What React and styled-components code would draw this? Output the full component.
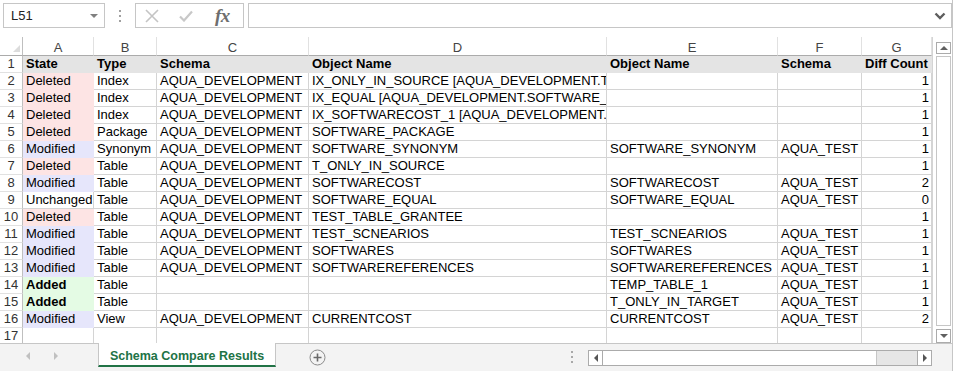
import React from "react";
import styled, { createGlobalStyle } from "styled-components";

const Global = createGlobalStyle`
  html, body { margin: 0; padding: 0; background: #fff; }
  body { font-family: "Liberation Sans", Arial, sans-serif; }
  * { box-sizing: border-box; }
`;

const COLS = [71, 63, 152, 298, 171, 84, 70];
const LETTERS = ["A", "B", "C", "D", "E", "F", "G"];
const GRID_TEMPLATE = `23px ${COLS.map((c) => c + "px").join(" ")}`;

const STATE_BG = {
  Deleted: "#fde4e4",
  Modified: "#e6e6fb",
  Added: "#e4fbe4",
};

const rows = [
  ["Deleted", "Index", "AQUA_DEVELOPMENT", "IX_ONLY_IN_SOURCE [AQUA_DEVELOPMENT.T_ONLY_IN_SOURCE]", "", "", "1"],
  ["Deleted", "Index", "AQUA_DEVELOPMENT", "IX_EQUAL [AQUA_DEVELOPMENT.SOFTWARE_EQUAL]", "", "", "1"],
  ["Deleted", "Index", "AQUA_DEVELOPMENT", "IX_SOFTWARECOST_1 [AQUA_DEVELOPMENT.SOFTWARECOST]", "", "", "1"],
  ["Deleted", "Package", "AQUA_DEVELOPMENT", "SOFTWARE_PACKAGE", "", "", "1"],
  ["Modified", "Synonym", "AQUA_DEVELOPMENT", "SOFTWARE_SYNONYM", "SOFTWARE_SYNONYM", "AQUA_TEST", "1"],
  ["Deleted", "Table", "AQUA_DEVELOPMENT", "T_ONLY_IN_SOURCE", "", "", "1"],
  ["Modified", "Table", "AQUA_DEVELOPMENT", "SOFTWARECOST", "SOFTWARECOST", "AQUA_TEST", "2"],
  ["Unchanged", "Table", "AQUA_DEVELOPMENT", "SOFTWARE_EQUAL", "SOFTWARE_EQUAL", "AQUA_TEST", "0"],
  ["Deleted", "Table", "AQUA_DEVELOPMENT", "TEST_TABLE_GRANTEE", "", "", "1"],
  ["Modified", "Table", "AQUA_DEVELOPMENT", "TEST_SCNEARIOS", "TEST_SCNEARIOS", "AQUA_TEST", "1"],
  ["Modified", "Table", "AQUA_DEVELOPMENT", "SOFTWARES", "SOFTWARES", "AQUA_TEST", "1"],
  ["Modified", "Table", "AQUA_DEVELOPMENT", "SOFTWAREREFERENCES", "SOFTWAREREFERENCES", "AQUA_TEST", "1"],
  ["Added", "Table", "", "", "TEMP_TABLE_1", "AQUA_TEST", "1"],
  ["Added", "Table", "", "", "T_ONLY_IN_TARGET", "AQUA_TEST", "1"],
  ["Modified", "View", "AQUA_DEVELOPMENT", "CURRENTCOST", "CURRENTCOST", "AQUA_TEST", "2"],
];

const HEADER = ["State", "Type", "Schema", "Object Name", "Object Name", "Schema", "Diff Count"];

const Window = styled.div`
  width: 953px;
  height: 371px;
  overflow: hidden;
  border-right: 1px solid #c6c6c6;
  display: flex;
  flex-direction: column;
  background: #fff;
`;

const Toolbar = styled.div`
  height: 37px;
  flex: none;
  display: flex;
  align-items: flex-start;
  padding: 3px 0 0 3px;
`;

const NameBox = styled.div`
  width: 102px;
  height: 25px;
  border: 1px solid #c6c6c6;
  display: flex;
  align-items: center;
  justify-content: space-between;
  padding: 0 6px 0 7px;
  font-size: 13px;
  color: #222;
`;

const Caret = styled.span`
  width: 0;
  height: 0;
  border-left: 4px solid transparent;
  border-right: 4px solid transparent;
  border-top: 4px solid #808080;
`;

const Dots = styled.div`
  width: 30px;
  height: 25px;
  display: flex;
  flex-direction: column;
  align-items: center;
  justify-content: center;
  gap: 3px;
  & > span {
    width: 2px;
    height: 2px;
    background: #a0a0a0;
  }
`;

const IconBox = styled.div`
  width: 109px;
  height: 25px;
  border: 1px solid #c6c6c6;
  display: flex;
  align-items: center;
  padding-left: 9px;
  gap: 20px;
`;

const Fx = styled.span`
  font-family: "Liberation Serif", "Times New Roman", serif;
  font-style: italic;
  font-weight: bold;
  font-size: 19px;
  color: #6e6e6e;
  margin-left: 2px;
  letter-spacing: -0.5px;
  line-height: 1;
`;

const FormulaInput = styled.div`
  flex: 1;
  margin-left: 4px;
  height: 25px;
  border: 1px solid #c6c6c6;
  display: flex;
  align-items: center;
  justify-content: flex-end;
  padding-right: 5px;
`;

const Main = styled.div`
  flex: 1;
  display: flex;
  min-height: 0;
`;

const Sheet = styled.div`
  width: 932px;
  flex: none;
  overflow: hidden;
  display: grid;
  grid-template-columns: ${GRID_TEMPLATE};
  grid-auto-rows: 17px;
  grid-template-rows: 19px;
  align-content: start;
  font-size: 13px;
  color: #000;
`;

const Corner = styled.div`
  border-right: 1px solid #bfbfbf;
  border-bottom: 1px solid #ababab;
  position: relative;
  &::after {
    content: "";
    position: absolute;
    right: 2px;
    bottom: 3px;
    width: 0;
    height: 0;
    border-left: 7px solid transparent;
    border-bottom: 7px solid #dcdcdc;
  }
`;

const ColHead = styled.div`
  border-right: 1px solid #e1e1e1;
  border-bottom: 1px solid #ababab;
  display: flex;
  align-items: center;
  justify-content: center;
  color: #444;
  font-size: 13px;
  padding-top: 2px;
`;

const RowHead = styled.div`
  border-right: 1px solid #bfbfbf;
  border-bottom: 1px solid #e1e1e1;
  display: flex;
  align-items: center;
  justify-content: center;
  color: #333;
  font-size: 13px;
  line-height: 16px;
`;

const Cell = styled.div`
  background: ${(p) => p.$bg || "#fff"};
  border-right: 1px solid ${(p) => p.$bg || "#d4d4d4"};
  border-bottom: 1px solid ${(p) => p.$bg || "#d4d4d4"};
  font-weight: ${(p) => (p.$bold ? "bold" : "normal")};
  text-align: ${(p) => (p.$right ? "right" : "left")};
  padding: 0 ${(p) => (p.$right ? "2px" : "0")} 0 3px;
  white-space: nowrap;
  overflow: hidden;
  line-height: 16px;
`;

const VScroll = styled.div`
  flex: 1;
  border-left: 1px solid #d4d4d4;
  display: flex;
  flex-direction: column;
  padding: 5px 1px 0 3px;
`;

const ScrollBtn = styled.div`
  height: ${(p) => p.$h}px;
  border: 1px solid #ababab;
  display: flex;
  align-items: center;
  justify-content: center;
  background: #fff;
  flex: none;
`;

const ArrowUp = styled.span`
  width: 0;
  height: 0;
  border-left: 4px solid transparent;
  border-right: 4px solid transparent;
  border-bottom: 4px solid #606060;
`;

const ArrowDown = styled.span`
  width: 0;
  height: 0;
  border-left: 4px solid transparent;
  border-right: 4px solid transparent;
  border-top: 4px solid #606060;
`;

const VThumb = styled.div`
  flex: 1;
  margin: 2px 0 3px;
  border: 1px solid #c6c6c6;
  background: #fff;
`;

const TabBar = styled.div`
  height: 28px;
  flex: none;
  background: #f3f3f3;
  border-top: 1px solid #c6c6c6;
  display: flex;
  align-items: flex-start;
`;

const NavArea = styled.div`
  width: 98px;
  height: 24px;
  display: flex;
  align-items: center;
  padding-left: 26px;
  gap: 24px;
`;

const NavLeft = styled.span`
  width: 0;
  height: 0;
  border-top: 4px solid transparent;
  border-bottom: 4px solid transparent;
  border-right: 4px solid ${(p) => p.$c};
`;

const NavRight = styled.span`
  width: 0;
  height: 0;
  border-top: 4px solid transparent;
  border-bottom: 4px solid transparent;
  border-left: 4px solid ${(p) => p.$c};
`;

const Tab = styled.div`
  width: 178px;
  height: 24px;
  margin-top: -1px;
  background: #fff;
  border-left: 1px solid #c6c6c6;
  border-right: 1px solid #c6c6c6;
  border-bottom: 2px solid #217346;
  display: flex;
  align-items: center;
  justify-content: center;
  color: #217346;
  font-weight: bold;
  font-size: 12.5px;
  padding-top: 3px;
`;

const PlusWrap = styled.div`
  width: 82px;
  height: 24px;
  display: flex;
  align-items: center;
  justify-content: center;
  padding-left: 1px;
  padding-top: 2px;
`;

const Sep = styled.div`
  width: 230px;
  height: 24px;
  display: flex;
  align-items: center;
  justify-content: flex-end;
  padding: 2px 15px 0 0;
`;

const SepDots = styled.div`
  display: flex;
  flex-direction: column;
  gap: 3px;
  & > span {
    width: 2px;
    height: 2px;
    background: #a8a8a8;
  }
`;

const HScroll = styled.div`
  width: 344px;
  height: 16px;
  margin-top: 6px;
  display: flex;
  border: 1px solid #ababab;
  background: #e6e6e6;
`;

const HBtn = styled.div`
  width: 14px;
  flex: none;
  background: #fff;
  display: flex;
  align-items: center;
  justify-content: center;
  border-${(p) => p.$side}: 1px solid #ababab;
`;

const HThumb = styled.div`
  width: 274px;
  flex: none;
  background: #fff;
  border-right: 1px solid #c6c6c6;
`;

const HTrack = styled.div`
  flex: 1;
`;

function XIcon() {
  return (
    <svg width="14" height="14" viewBox="0 0 14 14">
      <path d="M1 1 L13 13 M13 1 L1 13" stroke="#c4c4c4" strokeWidth="1.6" fill="none" />
    </svg>
  );
}

function CheckIcon() {
  return (
    <svg width="14" height="12" viewBox="0 0 14 12">
      <path d="M1 6.5 L5 10.5 L13 1.5" stroke="#c8c8c8" strokeWidth="2.2" fill="none" />
    </svg>
  );
}

function Chevron() {
  return (
    <svg width="12" height="8" viewBox="0 0 12 8">
      <path d="M1.5 1.5 L6 6 L10.5 1.5" stroke="#5e5e5e" strokeWidth="2.4" fill="none" />
    </svg>
  );
}

function PlusCircle() {
  return (
    <svg width="17" height="17" viewBox="0 0 17 17">
      <circle cx="8.5" cy="8.5" r="7.5" stroke="#8a8a8a" strokeWidth="1" fill="#f3f3f3" />
      <path d="M8.5 4.5 V12.5 M4.5 8.5 H12.5" stroke="#6a6a6a" strokeWidth="1.6" />
    </svg>
  );
}

export default function App() {
  return (
    <>
      <Global />
      <Window>
        <Toolbar>
          <NameBox>
            <span>L51</span>
            <Caret />
          </NameBox>
          <Dots>
            <span />
            <span />
            <span />
          </Dots>
          <IconBox>
            <XIcon />
            <CheckIcon />
            <Fx>fx</Fx>
          </IconBox>
          <FormulaInput>
            <Chevron />
          </FormulaInput>
        </Toolbar>
        <Main>
          <Sheet>
            <Corner />
            {LETTERS.map((l) => (
              <ColHead key={l}>{l}</ColHead>
            ))}
            <RowHead>1</RowHead>
            {HEADER.map((h, i) => (
              <Cell key={"h" + i} $bg="#e4e4e4" $bold>
                {h}
              </Cell>
            ))}
            {rows.map((r, ri) => (
              <React.Fragment key={ri}>
                <RowHead>{ri + 2}</RowHead>
                {r.map((v, ci) => (
                  <Cell
                    key={ci}
                    $bg={ci === 0 ? STATE_BG[v] : undefined}
                    $bold={ci === 0 && v === "Added"}
                    $right={ci === 6}
                  >
                    {v}
                  </Cell>
                ))}
              </React.Fragment>
            ))}
            <RowHead>17</RowHead>
            {LETTERS.map((l) => (
              <Cell key={"e" + l} />
            ))}
          </Sheet>
          <VScroll>
            <ScrollBtn $h={12}>
              <ArrowUp />
            </ScrollBtn>
            <VThumb />
            <ScrollBtn $h={14}>
              <ArrowDown />
            </ScrollBtn>
          </VScroll>
        </Main>
        <TabBar>
          <NavArea>
            <NavLeft $c="#c0c0c0" />
            <NavRight $c="#c0c0c0" />
          </NavArea>
          <Tab>Schema Compare Results</Tab>
          <PlusWrap>
            <PlusCircle />
          </PlusWrap>
          <Sep>
            <SepDots>
              <span />
              <span />
              <span />
            </SepDots>
          </Sep>
          <HScroll>
            <HBtn $side="right">
              <NavLeft $c="#555" />
            </HBtn>
            <HThumb />
            <HTrack />
            <HBtn $side="left">
              <NavRight $c="#555" />
            </HBtn>
          </HScroll>
        </TabBar>
      </Window>
    </>
  );
}
